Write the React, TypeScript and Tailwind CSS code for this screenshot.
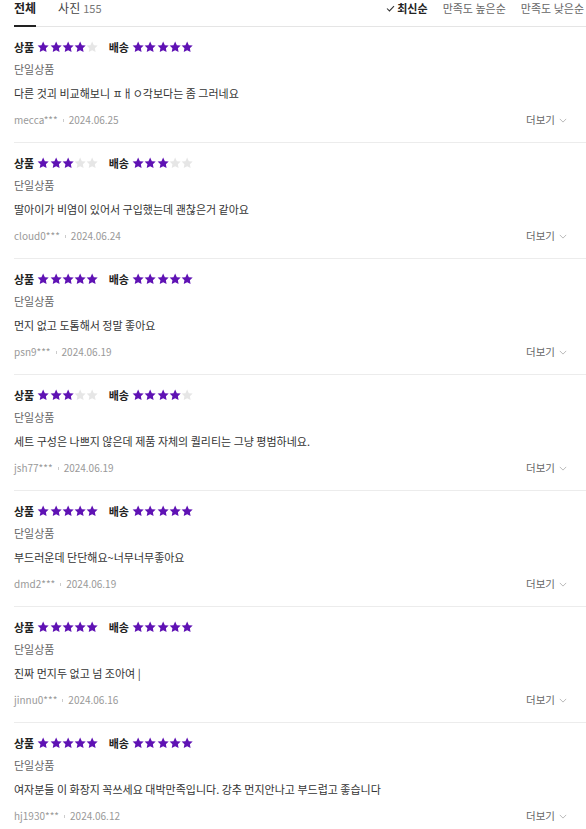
import React from 'react';

type Review = {
  product: number;
  delivery: number;
  option: string;
  body: string;
  user: string;
  date: string;
};

const reviews: Review[] = [
  { product: 4, delivery: 5, option: '단일상품', body: '다른 것괴 비교해보니 ㅍㅐㅇ각보다는 좀 그러네요', user: 'mecca***', date: '2024.06.25' },
  { product: 3, delivery: 3, option: '단일상품', body: '딸아이가 비염이 있어서 구입했는데 괜찮은거 같아요', user: 'cloud0***', date: '2024.06.24' },
  { product: 5, delivery: 5, option: '단일상품', body: '먼지 없고 도톰해서 정말 좋아요', user: 'psn9***', date: '2024.06.19' },
  { product: 3, delivery: 4, option: '단일상품', body: '세트 구성은 나쁘지 않은데 제품 자체의 퀄리티는 그냥 평범하네요.', user: 'jsh77***', date: '2024.06.19' },
  { product: 5, delivery: 5, option: '단일상품', body: '부드러운데 단단해요~너무너무좋아요', user: 'dmd2***', date: '2024.06.19' },
  { product: 5, delivery: 5, option: '단일상품', body: '진짜 먼지두 없고 넘 조아여 |', user: 'jinnu0***', date: '2024.06.16' },
  { product: 5, delivery: 5, option: '단일상품', body: '여자분들 이 화장지 꼭쓰세요 대박만족입니다. 강추 먼지안나고 부드럽고 좋습니다', user: 'hj1930***', date: '2024.06.12' },
];

const Star = ({ filled }: { filled: boolean }) => (
  <svg viewBox="0 0 24 24" className={`w-[12.3px] h-[12.3px] ${filled ? 'fill-[#5f12b4]' : 'fill-[#e6e6e6]'}`}>
    <path d="M12 1.2l3.3 6.9 7.5 0.9-5.5 5.2 1.4 7.5L12 18l-6.7 3.7 1.4-7.5L1.2 9l7.5-0.9z" />
  </svg>
);

const Stars = ({ value }: { value: number }) => (
  <div className="flex items-center">
    {[0, 1, 2, 3, 4].map(i => <Star key={i} filled={i < value} />)}
  </div>
);

const ReviewItem = ({ r }: { r: Review }) => (
  <div className="border-b border-[#ececec] pt-[12px] pb-[14px]">
    <div className="flex items-center h-4 text-[11px] font-bold text-[#222] leading-4">
      <span className="mr-[3px]">상품</span>
      <Stars value={r.product} />
      <span className="ml-[10px] mr-[3px]">배송</span>
      <Stars value={r.delivery} />
    </div>
    <div className="mt-[6px] text-[11px] leading-4 text-[#666]">{r.option}</div>
    <div className="mt-[7px] text-[11px] leading-[18px] text-[#333]">{r.body}</div>
    <div className="mt-[10px] flex items-center justify-between pr-[19px] h-4">
      <div className="flex items-center text-[10px] text-[#999] leading-4">
        <span>{r.user}</span>
        <span className="mx-[5px] w-px h-[3px] bg-[#ccc]" />
        <span>{r.date}</span>
      </div>
      <button className="flex items-center gap-[4px] text-[10.5px] text-[#666] leading-4">
        더보기
        <svg viewBox="0 0 10 6" className="w-[8px] h-[5px] stroke-[#aaa] fill-none">
          <path d="M1 1l4 4 4-4" strokeWidth="1" />
        </svg>
      </button>
    </div>
  </div>
);

export default function App() {
  return (
    <div className="bg-white w-[586px] min-h-[829px] overflow-hidden pl-[14px]" style={{ fontFamily: '"Noto Sans CJK KR", "Noto Sans", sans-serif' }}>
      <div className="flex items-end justify-between border-b border-[#e5e5e5] h-[27px]">
        <div className="flex items-end h-full">
          <div className="h-full flex flex-col justify-between">
            <span className="text-[12px] font-bold text-[#222] leading-[16px]">전체</span>
            <span className="block h-[2px] bg-[#222] mb-[-1px]" />
          </div>
          <div className="ml-[22px] h-full flex items-start">
            <span className="text-[12px] text-[#444] leading-[16px]">사진</span>
            <span className="ml-[3px] text-[11px] text-[#777] leading-[16px]">155</span>
          </div>
        </div>
        <div className="flex items-start h-full pr-[2px] text-[11px] leading-[16px]">
          <span className="flex items-center font-bold text-[#222]">
            <svg viewBox="0 0 12 10" className="w-[9px] h-[7px] mr-[2px] stroke-[#333] fill-none">
              <path d="M1 5l3.5 3.5L11 1.5" strokeWidth="1.5" />
            </svg>
            최신순
          </span>
          <span className="ml-[15px] text-[#666]">만족도 높은순</span>
          <span className="ml-[15px] text-[#666]">만족도 낮은순</span>
        </div>
      </div>
      {reviews.map((r, i) => <ReviewItem key={i} r={r} />)}
    </div>
  );
}
